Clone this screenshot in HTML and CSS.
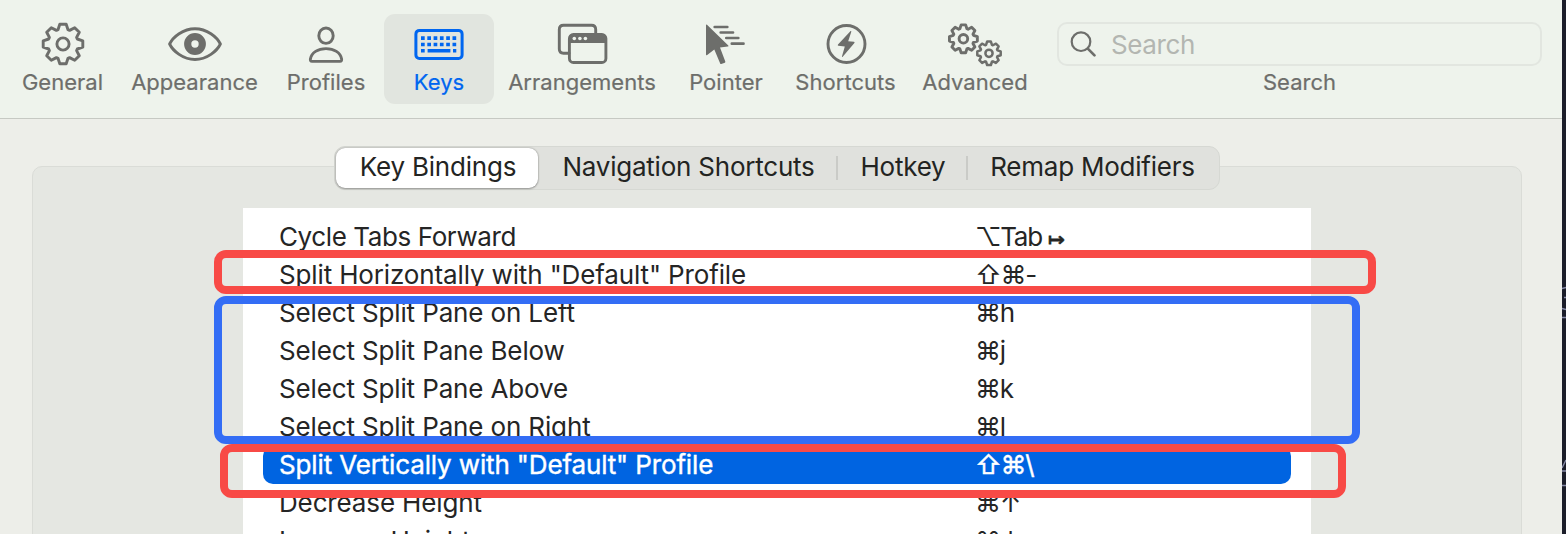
FILE: index.html
```html
<!DOCTYPE html>
<html lang="en">
<head>
<meta charset="utf-8">
<title>Preferences</title>
<link rel="stylesheet" href="styles.css">
</head>
<body>
<svg class="defs" width="0" height="0">
  <symbol id="gear" viewBox="-22 -22 44 44" overflow="visible">
    <path vector-effect="non-scaling-stroke" d="M-3.2-19.8H3.2L5-14.3 6.6-13.6 11.7-16.3 16.3-11.7 13.6-6.6 14.3-5 19.8-3.2V3.2L14.3 5 13.6 6.6 16.3 11.7 11.7 16.3 6.6 13.6 5 14.3 3.2 19.8H-3.2L-5 14.3-6.6 13.6-11.7 16.3-16.3 11.7-13.6 6.6-14.3 5-19.8 3.2V-3.2L-14.3-5-13.6-6.6-16.3-11.7-11.7-16.3-6.6-13.6-5-14.3Z"/>
    <circle vector-effect="non-scaling-stroke" r="6.1"/>
  </symbol>
</svg>
<div class="screen">
  <div class="window">
    <header class="toolbar">
      <div class="tool general">
        <svg class="icon line" width="60" height="48" viewBox="0 0 60 48"><use href="#gear" x="8" y="2" width="44" height="44"/></svg>
        <span class="label">General</span>
      </div>
      <div class="tool appearance">
        <svg class="icon line" width="60" height="48" viewBox="0 0 60 48">
          <path d="M4.600 24C8 17 18 8.700 30 8.700S52 17 55.400 24C52 31 42 39.500 30 39.500S8 31 4.600 24Z"/>
          <circle cx="30" cy="24" r="7.300" stroke-width="7.200"/>
        </svg>
        <span class="label">Appearance</span>
      </div>
      <div class="tool profiles">
        <svg class="icon line" width="60" height="48" viewBox="0 0 60 48">
          <ellipse cx="30" cy="15.700" rx="7.200" ry="7.700"/>
          <path d="M16 41.400H44Q46 41.400 45.600 39C44.600 32.500 38 28.600 30 28.600S15.400 32.500 14.400 39Q14 41.400 16 41.400Z"/>
        </svg>
        <span class="label">Profiles</span>
      </div>
      <div class="tool keys selected">
        <svg class="icon line" width="60" height="48" viewBox="0 0 60 48">
          <rect x="6.900" y="10.400" width="46.200" height="28" rx="3.500" stroke-width="3"/>
          <path class="dots" d="M12 18.200H48M12 24.500H48" stroke-width="3.700" stroke-dasharray="3.700 2.600"/>
          <path class="dots" d="M12 30.800H15.700M18.600 30.800H41.400M44 30.800H47.300" stroke-width="3.500"/>
        </svg>
        <span class="label">Keys</span>
      </div>
      <div class="tool arrangements">
        <svg class="icon line" width="60" height="48" viewBox="0 0 60 48">
          <path d="M17 33.200H11.500Q7.300 33.200 7.300 29V9.500Q7.300 5.300 11.500 5.300H39.500Q43.700 5.300 43.700 9.500V15"/>
          <rect x="17.400" y="14.500" width="36.500" height="28" rx="4"/>
          <path class="solid" d="M17 23V18Q17 14 21 14H50Q54 14 54 18V23Z"/>
          <g class="holes"><circle cx="22.300" cy="18.500" r="1.800"/><circle cx="27.900" cy="18.500" r="1.800"/><circle cx="33.400" cy="18.500" r="1.800"/></g>
        </svg>
        <span class="label">Arrangements</span>
      </div>
      <div class="tool pointer">
        <svg class="icon line" width="60" height="48" viewBox="0 0 60 48">
          <path class="solid" d="M10 5.200Q10 4 11 4.800L32.300 25.400Q33 26.400 31.800 26.500L24 27.500 29.300 41.500Q29.500 42.300 28.800 42.700L25.300 44Q24.500 44.300 24.200 43.500L18.300 29.500 11.200 34.900Q10 35.600 10 34.300Z"/>
          <path d="M18.700 7H31.300M24.700 12.500H37M30.300 18H42.300M35.800 23.700H47.500" stroke-width="2.700"/>
        </svg>
        <span class="label">Pointer</span>
      </div>
      <div class="tool shortcuts">
        <svg class="icon line" width="60" height="48" viewBox="0 0 60 48">
          <circle cx="30.500" cy="24" r="18.500"/>
          <path class="solid" d="M34.600 11Q35.500 10.700 35.300 11.800L32.200 21.300 38 21.800Q39 22 38.400 22.900L26.700 36.800Q25.800 37.400 26 36.200L28.800 26.600 22.300 25.800Q21.300 25.500 22 24.600Z"/>
        </svg>
        <span class="label">Shortcuts</span>
      </div>
      <div class="tool advanced">
        <svg class="icon line" width="60" height="48" viewBox="0 0 60 48">
          <use href="#gear" x="2.900" y="3.300" width="31" height="31"/>
          <use href="#gear" class="small-gear" x="31" y="20.300" width="26" height="26"/>
        </svg>
        <span class="label">Advanced</span>
      </div>
      <div class="search">
        <div class="search-field">
          <svg class="line" width="30" height="30" viewBox="0 0 30 30"><circle cx="12" cy="12.700" r="9.300" stroke-width="2.200"/><path d="M18.800 19.600 25.500 26.400" stroke-width="2.700"/></svg>
          <span class="placeholder">Search</span>
        </div>
        <span class="label">Search</span>
      </div>
    </header>
    <main class="content">
      <section class="panel">
        <nav class="tabs">
          <span class="tab active">Key Bindings</span>
          <span class="tab navigation">Navigation Shortcuts</span>
          <span class="tab hotkey">Hotkey</span>
          <span class="tab remap">Remap Modifiers</span>
        </nav>
        <div class="table">
          <div class="row"><span class="action forward">Cycle Tabs Forward</span><span class="key">⌥Tab <span class="tab-arrow">↦</span></span></div>
          <div class="row"><span class="action">Split Horizontally with "Default" Profile</span><span class="key">⇧⌘-</span></div>
          <div class="row"><span class="action">Select Split Pane on Left</span><span class="key">⌘h</span></div>
          <div class="row"><span class="action">Select Split Pane Below</span><span class="key">⌘j</span></div>
          <div class="row"><span class="action">Select Split Pane Above</span><span class="key">⌘k</span></div>
          <div class="row"><span class="action">Select Split Pane on Right</span><span class="key">⌘l</span></div>
          <div class="row current"><span class="action">Split Vertically with "Default" Profile</span><span class="key">⇧⌘\</span></div>
          <div class="row"><span class="action">Decrease Height</span><span class="key">⌘↑</span></div>
          <div class="row"><span class="action">Increase Height</span><span class="key">⌘↓</span></div>
        </div>
      </section>
    </main>
  </div>
  <aside class="backdrop">
    <svg width="4" height="534" viewBox="0 0 4 534"><path d="M0 288.500 4 287.500M2 297.500H4M0 308.500 4 309.500M0 317.500H4M0 468 4 460M0 471H4M0 485.500H4"/></svg>
  </aside>
  <div class="mark red first"></div>
  <div class="mark blue"></div>
  <div class="mark red second"></div>
</div>
</body>
</html>
```
FILE: styles.css
```css
* { box-sizing: border-box; }
body { margin: 0; font-family: Inter, "Liberation Sans", sans-serif; }
.defs { position: absolute; }
.screen { position: relative; display: flex; width: 1566px; height: 534px; overflow: hidden; }
.window { width: 1562px; height: 534px; background: #edeee9; overflow: hidden; }
.backdrop { width: 4px; background: #1c1e2a; }
.backdrop path { stroke: #878ba8; stroke-width: 1.4; fill: none; }
.backdrop svg { display: block; }

.toolbar { display: flex; height: 119px; padding: 14px 0 0 8px; background: #eef3ec; border-bottom: 1px solid #c6c9c3; color: #6d6e6b; }
.tool { display: flex; flex-direction: column; align-items: center; height: 90px; padding-top: 6px; }
.icon { display: block; flex: none; }
.line { fill: none; stroke: currentColor; stroke-width: 2.9; stroke-linejoin: round; stroke-linecap: round; }
.line .solid { fill: currentColor; stroke: none; }
.line .dots { stroke-linecap: butt; }
.line .holes { fill: #eef3ec; stroke: none; }
.small-gear { stroke-width: 2.5; }
.label { font-size: 22px; line-height: 28px; letter-spacing: 0.02px; -webkit-text-stroke: 0.2px currentColor; white-space: nowrap; }
.general { width: 109px; }
.appearance { width: 155px; }
.profiles { width: 108px; margin-right: 4px; }
.keys { width: 110px; }
.arrangements { width: 176px; }
.pointer { width: 112px; }
.shortcuts { width: 127px; }
.advanced { width: 132px; }
.selected { background: #e1e5df; border-radius: 11px; color: #0066f0; }
.search { display: flex; flex-direction: column; align-items: center; width: 485px; margin-left: 16px; padding-top: 8px; }
.search-field { display: flex; align-items: center; width: 485px; height: 44px; margin-bottom: 2px; padding-left: 10px; border: 2px solid #e2e6e0; border-radius: 10px; }
.placeholder { margin-left: 12px; padding-top: 2px; font-size: 26px; line-height: 30px; letter-spacing: -0.4px; color: #b3b6b1; }

.content { padding: 47px 40px 0 32px; }
.panel { display: flex; flex-direction: column; align-items: center; height: 400px; background: #e5e7e2; border: 1px solid #dadcd7; border-radius: 10px; }
.tabs { display: flex; width: 886px; height: 44px; margin: -21px 0 18px; padding: 1px; background: #e0e1dd; border: 1px solid #d6d8d3; border-radius: 11px; font-size: 26px; line-height: 38px; letter-spacing: -0.22px; color: #232422; }
.tab { text-align: center; white-space: nowrap; }
.active { width: 202px; padding-left: 2px; background: #fff; border-radius: 9px; box-shadow: 0 0 2px rgba(0,0,0,.35), 0 1px 2px rgba(0,0,0,.25); }
.navigation { width: 299px; padding-left: 2px; }
.hotkey, .remap { position: relative; }
.hotkey { width: 130px; padding-left: 2px; }
.remap { width: 251px; }
.hotkey::before, .remap::before { content: ""; position: absolute; left: -1px; top: 8px; width: 2px; height: 24px; background: #cacbc7; }
.table { width: 1068px; height: 340px; padding: 10px 20px 0; background: #fff; color: #252525; }
.row { display: flex; height: 38px; padding-left: 16px; font-size: 26px; line-height: 38px; white-space: nowrap; }
.action { width: 696px; letter-spacing: -0.14px; }
.forward { letter-spacing: -0.4px; }
.key { letter-spacing: -1.3px; }
.current { background: #0064e1; border-radius: 10px; color: #fff; -webkit-text-stroke: 0.4px #fff; }
.tab-arrow { font-size: 20px; -webkit-text-stroke: 0.8px currentColor; }

.mark { position: absolute; border: 8px solid; border-radius: 12px; }
.red { border-color: #f84a46; }
.blue { left: 214px; top: 296px; width: 1146px; height: 148px; border-color: #336df5; }
.first { left: 214px; top: 250px; width: 1162px; height: 44px; }
.second { left: 220px; top: 444px; width: 1126px; height: 54px; }
```
